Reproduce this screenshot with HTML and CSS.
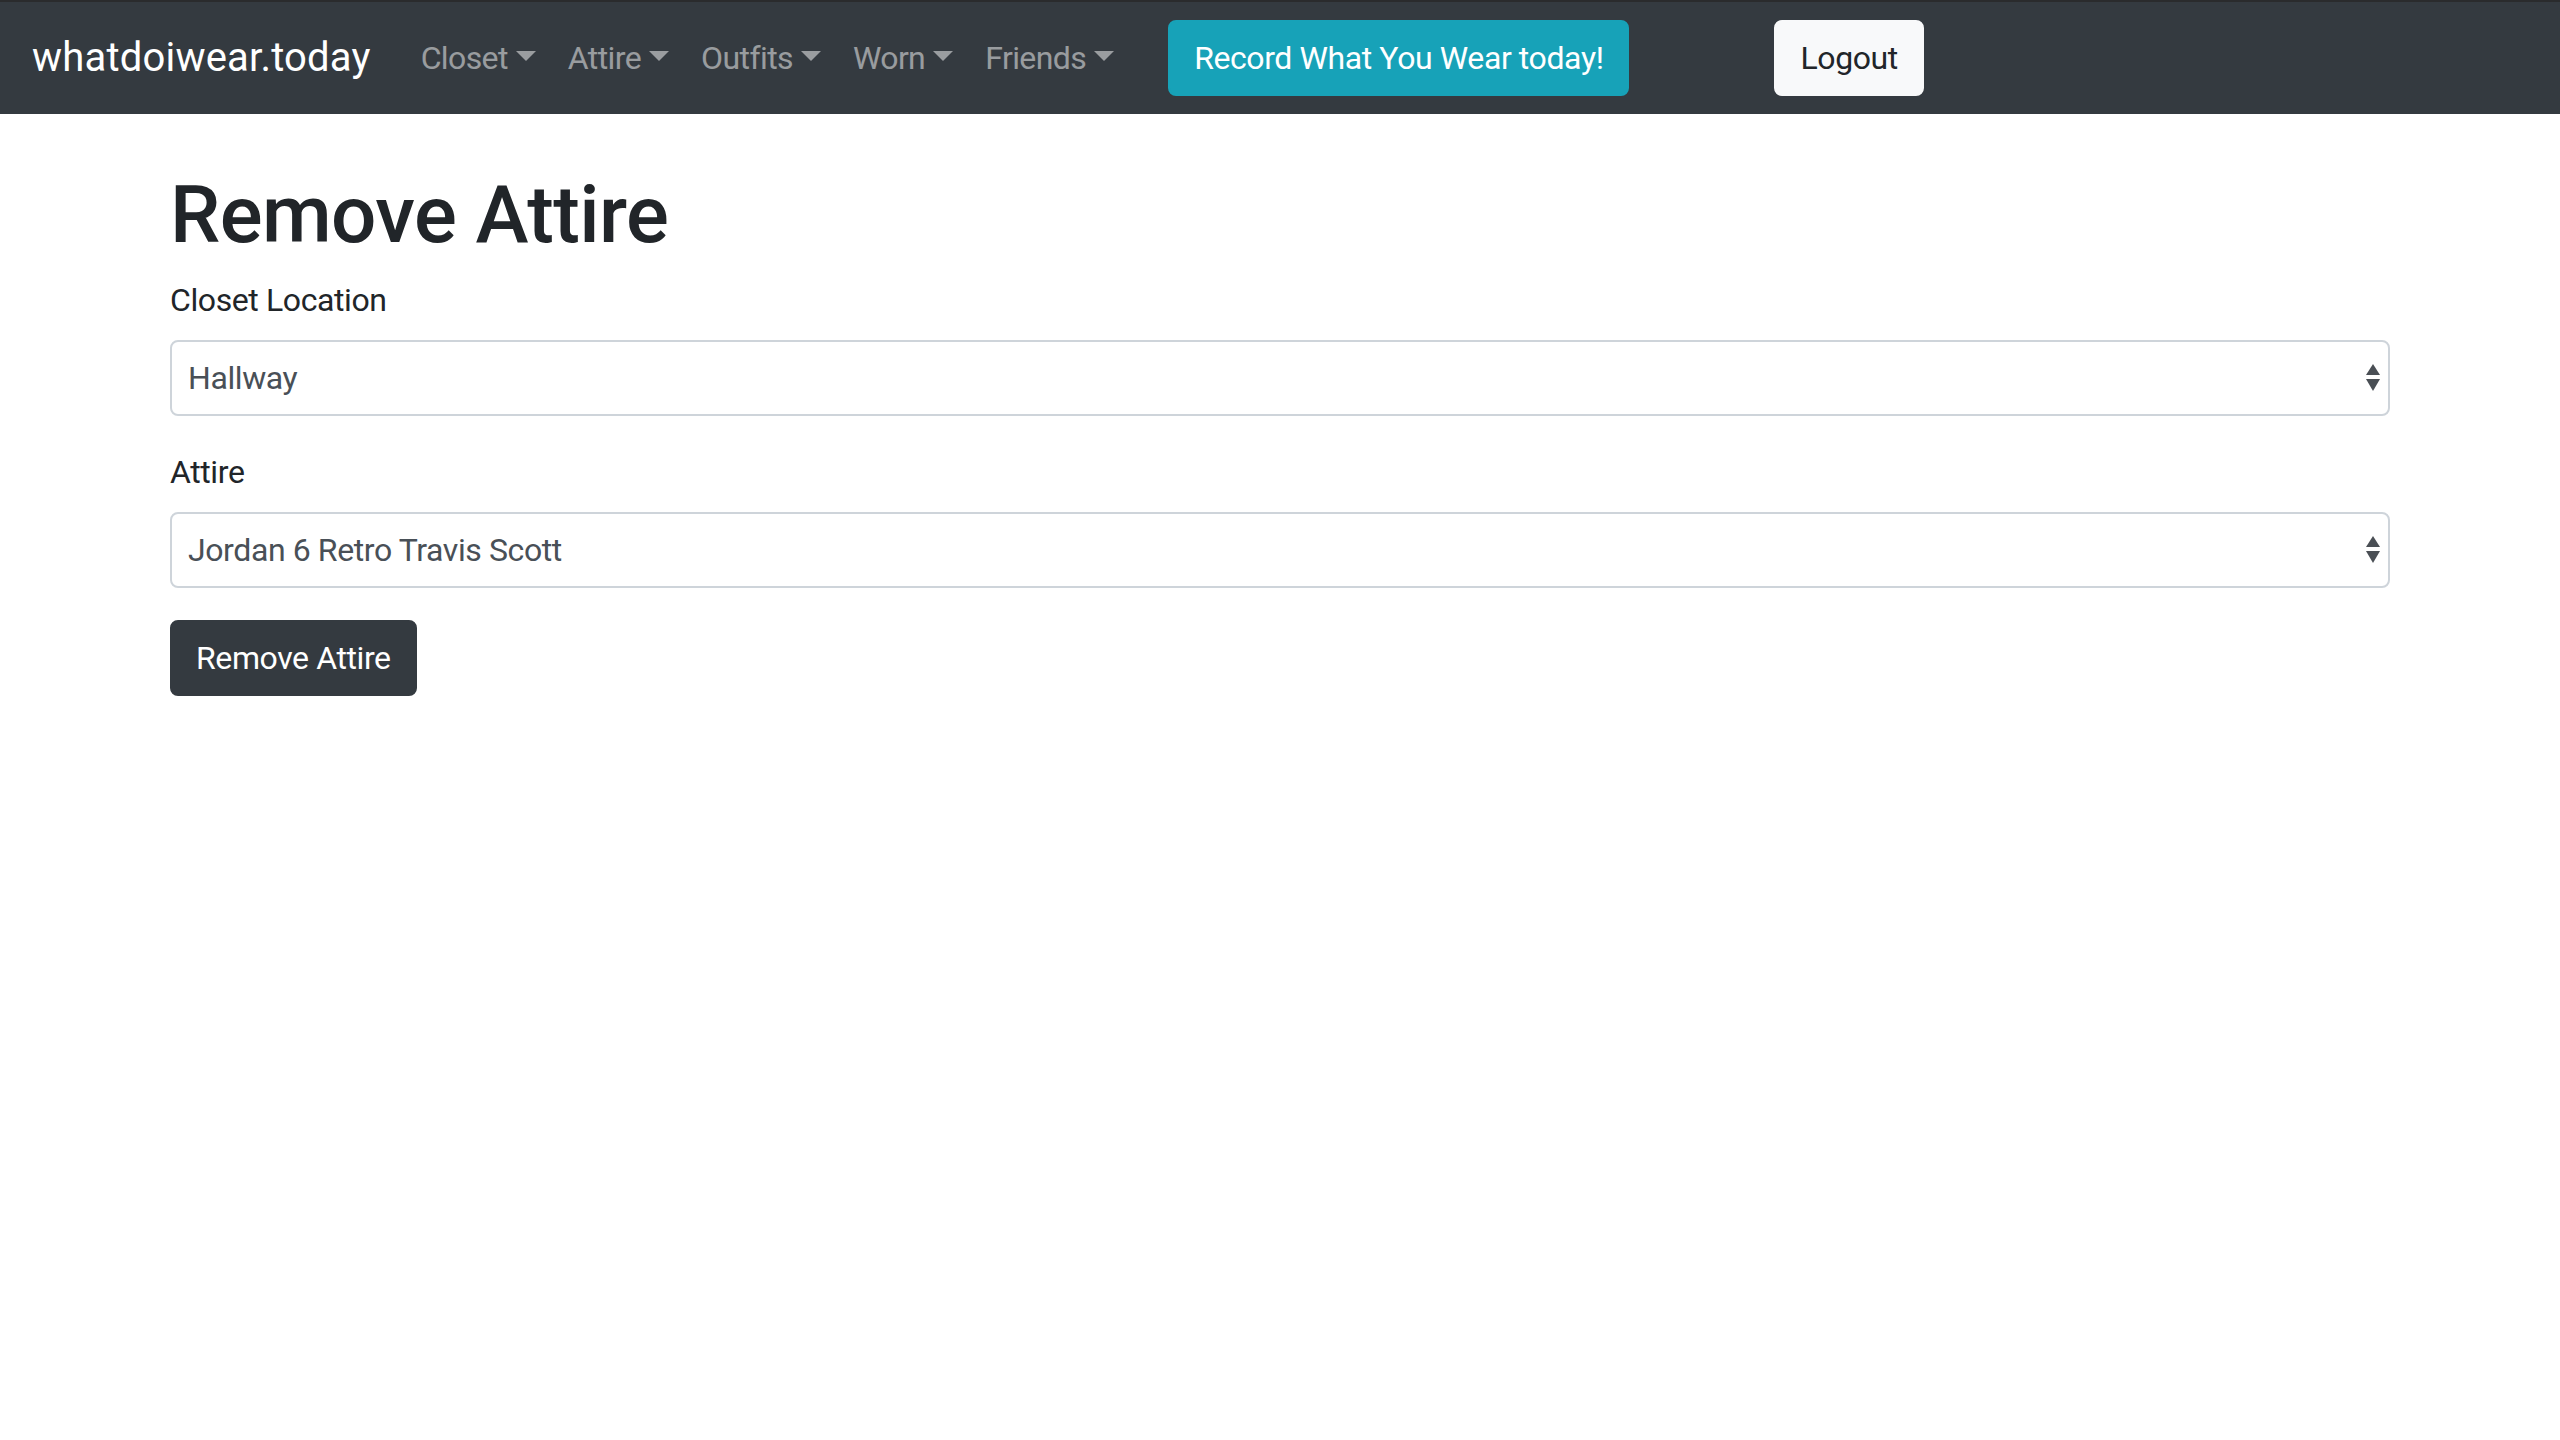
FILE: index.html
```html
<!DOCTYPE html>
<html lang="en">
<head>
<meta charset="utf-8">
<title>Remove Attire</title>
<link rel="stylesheet" href="styles.css">
</head>
<body>
<div class="topstrip"></div>
<nav class="navbar">
  <a class="brand" href="#">whatdoiwear.today</a>
  <ul class="nav">
    <li><a class="nav-link dropdown" href="#">Closet</a></li>
    <li><a class="nav-link dropdown" href="#">Attire</a></li>
    <li><a class="nav-link dropdown" href="#">Outfits</a></li>
    <li><a class="nav-link dropdown" href="#">Worn</a></li>
    <li><a class="nav-link dropdown" href="#">Friends</a></li>
  </ul>
  <a class="btn btn-info record" href="#">Record What You Wear today!</a>
  <a class="btn btn-light logout" href="#">Logout</a>
</nav>
<main class="container">
  <h1 class="title">Remove Attire</h1>
  <div class="form-group">
    <label class="label">Closet Location</label>
    <div class="select">
      <span class="select-text">Hallway</span>
      <svg class="arrows" width="14" height="28" viewBox="0 0 14 28"><path d="M7 0 L14 11 L0 11 Z" fill="#4a4f55"/><path d="M0 15 L14 15 L7 27 Z" fill="#4a4f55"/></svg>
    </div>
  </div>
  <div class="form-group">
    <label class="label">Attire</label>
    <div class="select">
      <span class="select-text">Jordan 6 Retro Travis Scott</span>
      <svg class="arrows" width="14" height="28" viewBox="0 0 14 28"><path d="M7 0 L14 11 L0 11 Z" fill="#4a4f55"/><path d="M0 15 L14 15 L7 27 Z" fill="#4a4f55"/></svg>
    </div>
  </div>
  <button class="btn btn-dark">Remove Attire</button>
</main>
</body>
</html>
```
FILE: styles.css
```css
* { box-sizing: border-box; }
html, body { margin: 0; padding: 0; }
body {
  font-family: "Roboto", "Liberation Sans", sans-serif;
  font-size: 32px;
  line-height: 1.5;
  letter-spacing: -0.4px;
  color: #212529;
  background: #fff;
}
a { text-decoration: none; }
.topstrip { height: 2px; background: #2a2b2d; }
.navbar {
  display: flex;
  align-items: center;
  height: 112px;
  padding: 16px 32px;
  background: #343a40;
}
.brand {
  color: #fff;
  font-size: 40px;
  line-height: 60px;
  letter-spacing: 0.2px;
  margin-right: 34px;
}
.nav { display: flex; list-style: none; margin: 0; padding: 0; }
.nav-link {
  display: block;
  padding: 0 16px;
  color: rgba(255,255,255,.5);
  line-height: 48px;
  letter-spacing: -0.6px;
}
.dropdown::after {
  content: "";
  display: inline-block;
  margin-left: 8px;
  vertical-align: 8px;
  border-top: 10px solid;
  border-right: 10px solid transparent;
  border-left: 10px solid transparent;
  border-bottom: 0;
}
.btn {
  display: inline-block;
  font-family: inherit;
  font-size: 32px;
  line-height: 48px;
  letter-spacing: -0.4px;
  padding: 12px 24px;
  border: 2px solid transparent;
  border-radius: 8px;
  cursor: pointer;
}
.btn-info { background: #17a2b8; border-color: #17a2b8; color: #fff; }
.btn-light { background: #f8f9fa; border-color: #f8f9fa; color: #212529; }
.btn-dark { background: #343a40; border-color: #343a40; color: #fff; }
.record { margin-left: 38px; }
.logout { margin-left: 145px; }
.container {
  width: 2280px;
  margin: 0 auto;
  padding: 53px 30px 0;
}
.title {
  font-size: 80px;
  font-weight: 500;
  line-height: 96px;
  letter-spacing: -0.6px;
  margin: 0 0 13px;
}
.form-group { margin-bottom: 32px; }
.label { display: block; margin-bottom: 16px; line-height: 48px; }
.select {
  display: flex;
  align-items: center;
  justify-content: space-between;
  height: 76px;
  border: 2px solid #ced4da;
  border-radius: 8px;
  padding: 0 8px 0 16px;
  color: #495057;
}
.arrows { display: block; }
```
